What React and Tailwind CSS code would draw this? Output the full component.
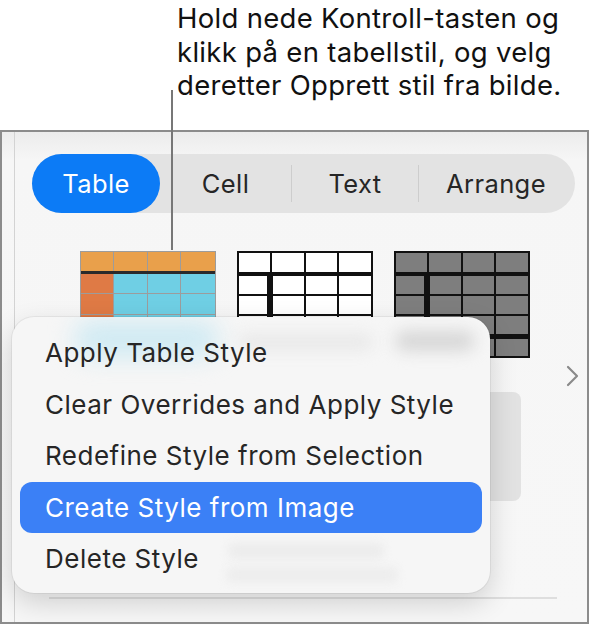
import React from "react";

const font = { fontFamily: "Inter, 'Noto Sans', sans-serif" };

/* ---------------- thumbnails ---------------- */

const Thumb = ({ bg, rows, headCols, bodyCols, cellColor, thick }) => (
  <svg width="136" height="107" viewBox="0 0 136 107" className="block shrink-0">
    <rect x="0" y="0" width="136" height="107" fill={bg} />
    {rows.map(([y1, y2], r) =>
      (r === 0 ? headCols : bodyCols).map(([x1, x2], c) => (
        <rect
          key={`${r}-${c}`}
          x={x1}
          y={y1}
          width={x2 - x1}
          height={y2 - y1}
          fill={cellColor(r, c)}
        />
      ))
    )}
    {thick}
  </svg>
);

const darkRows = [
  [2, 21],
  [25, 43],
  [45, 63],
  [65, 83],
  [88, 105],
];
const darkHead = [
  [2, 33],
  [35, 67],
  [69, 100],
  [102, 134],
];
const darkBody = [
  [2, 30],
  [36, 67],
  [69, 100],
  [102, 134],
];

const colorRows = [
  [1, 20],
  [23, 42],
  [43, 63],
  [64, 84],
  [85, 106],
];
const colorCols = [
  [1, 33],
  [34, 67],
  [68, 100],
  [101, 135],
];

const Thumbnails = () => (
  <div className="flex gap-[21px]">
    <Thumb
      bg="#9c9c9c"
      rows={colorRows}
      headCols={colorCols}
      bodyCols={colorCols}
      cellColor={(r, c) => (r === 0 ? "#e9a04b" : c === 0 ? "#df7a45" : "#6fcfe4")}
      thick={<rect x="1" y="20" width="134" height="3" fill="#2a2a2a" />}
    />
    <Thumb
      bg="#111111"
      rows={darkRows}
      headCols={darkHead}
      bodyCols={darkBody}
      cellColor={() => "#ffffff"}
    />
    <Thumb
      bg="#111111"
      rows={darkRows}
      headCols={darkHead}
      bodyCols={darkBody}
      cellColor={() => "#7e7e7e"}
    />
  </div>
);

/* ---------------- menu ---------------- */

const items = [
  "Apply Table Style",
  "Clear Overrides and Apply Style",
  "Redefine Style from Selection",
  "Create Style from Image",
  "Delete Style",
];

const ContextMenu = () => (
  <div className="absolute left-[12px] top-[317px] w-[478px] h-[276px] rounded-[22px] bg-[#f6f6f6] overflow-hidden shadow-[0_10px_28px_rgba(0,0,0,0.16),0_0_0_1px_rgba(0,0,0,0.05)] pt-[10px] px-[8px]">
    {/* frosted content showing through */}
    <div className="absolute left-[62px] top-[4px] w-[145px] h-[36px] rounded-full bg-[#cfeaf3] blur-md" />
    <div className="absolute left-[226px] top-[18px] w-[135px] h-[14px] rounded-full bg-[#e6e6e6] blur-sm" />
    <div className="absolute left-[383px] top-[14px] w-[80px] h-[20px] rounded-full bg-[#d6d6d6] blur-sm" />
    <div className="absolute left-[216px] top-[226px] w-[156px] h-[16px] rounded-[6px] bg-[#ececec] blur-[4px]" />
    <div className="absolute left-[214px] top-[250px] w-[172px] h-[16px] rounded-[6px] bg-[#ededed] blur-[4px]" />

    {items.map((label) => {
      const active = label === "Create Style from Image";
      return (
        <div
          key={label}
          className={`relative h-[51.5px] flex items-center pl-[25px] rounded-[12px] text-[26px] tracking-[0.5px] ${
            active ? "bg-[#3b80f6] text-white" : "text-[#262626]"
          }`}
        >
          {label}
        </div>
      );
    })}
  </div>
);

/* ---------------- app ---------------- */

export default function App() {
  return (
    <div className="relative w-[593px] h-[625px] bg-white overflow-hidden" style={font}>
      {/* Caption */}
      <div className="h-[130px] pl-[177px] pt-[2px] text-[27.5px] leading-[33.5px] tracking-[0.3px] text-[#111]">
        <p>Hold nede Kontroll-tasten og</p>
        <p>klikk på en tabellstil, og velg</p>
        <p>deretter Opprett stil fra bilde.</p>
      </div>

      {/* Panel frame */}
      <div className="flex w-[589px] h-[494px] border-2 border-[#8c8c8c] bg-[linear-gradient(to_bottom,#ececec_0px,#f6f6f6_28px,#f7f7f7_100%)]">
        <div className="w-[13px] border-r border-[#d3d3d3]" />
        <div className="flex-1 flex flex-col">
          {/* Tabs */}
          <div className="mt-[22px] ml-[17px] w-[543px] h-[59px] flex items-center rounded-full bg-[#e3e3e3] text-[25.5px] tracking-[0.4px] text-[#262626]">
            <div className="w-[128px] h-full rounded-full bg-[#0c7bf6] text-white flex items-center justify-center pt-[2px]">
              Table
            </div>
            <div className="w-[131px] flex justify-center pt-[2px]">Cell</div>
            <div className="w-px h-[37px] bg-[#cdcdcd]" />
            <div className="w-[126px] flex justify-center pt-[2px]">Text</div>
            <div className="w-px h-[37px] bg-[#cdcdcd]" />
            <div className="flex-1 flex justify-center pr-[2px] pt-[2px]">Arrange</div>
          </div>

          {/* Styles */}
          <div className="mt-[38px] ml-[65px] flex">
            <Thumbnails />
          </div>
          <div className="flex justify-end pr-[8px] mt-[7px]">
            <svg width="14" height="22" viewBox="0 0 14 22" fill="none">
              <path d="M3 2 L12 11 L3 20" stroke="#8a8a8a" strokeWidth="2.2" strokeLinecap="round" strokeLinejoin="round" />
            </svg>
          </div>
          <div className="mt-[5px] ml-[384px] w-[122px] h-[109px] rounded-[8px] bg-[#e2e2e2]" />
          <div className="mt-[96px] ml-[34px] w-[508px] h-[2px] bg-[#dedede]" />
        </div>
      </div>

      {/* Callout line */}
      <div className="absolute left-[171px] top-[90px] w-[2px] h-[160px] bg-[#777]" />

      <ContextMenu />
    </div>
  );
}
